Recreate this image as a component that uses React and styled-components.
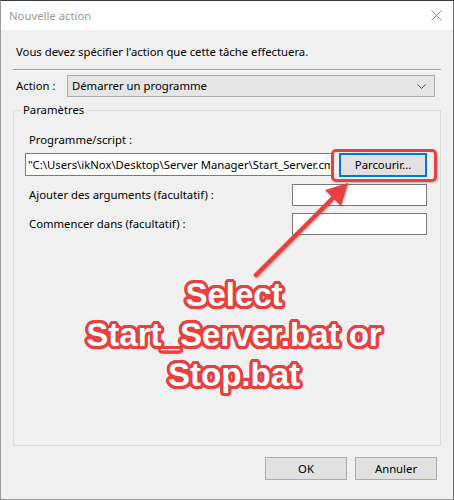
import React from 'react';
import styled, { createGlobalStyle } from 'styled-components';

const RED = '#e8403f';

const ring = (() => {
  const parts = [];
  for (let r of [1.5, 3]) {
    const n = r > 2 ? 24 : 12;
    for (let i = 0; i < n; i++) {
      const a = (i / n) * Math.PI * 2;
      parts.push(`${(Math.cos(a) * r).toFixed(2)}px ${(Math.sin(a) * r).toFixed(2)}px 0 ${RED}`);
    }
  }
  parts.push(`2px 3px 2px rgba(120,0,0,0.35)`);
  return parts.join(', ');
})();

const Global = createGlobalStyle`
  html, body { margin: 0; padding: 0; background: #f0f0f0; }
  body {
    font-family: "Noto Sans", "Liberation Sans", sans-serif;
    font-size: 11.3px;
    color: #000;
  }
  *, *::before, *::after { box-sizing: border-box; }
`;

const Window = styled.div`
  position: relative;
  width: 454px;
  height: 500px;
  display: flex;
  flex-direction: column;
  background: #f0f0f0;
  border: 1px solid #9a9a9a;
  border-top-color: #3c3c3c;
  border-right-color: #6a6a6a;
  overflow: hidden;
`;

const TitleBar = styled.div`
  height: 29px;
  flex: none;
  background: #fff;
  display: flex;
  align-items: center;
  justify-content: space-between;
  padding: 0 11px 0 8px;
`;

const Title = styled.span`
  color: #999;
  line-height: 16px;
`;

const CloseBtn = styled.div`
  width: 12px;
  height: 12px;
  display: flex;
  align-items: center;
  justify-content: center;
`;

const Body = styled.div`
  flex: 1;
  display: flex;
  flex-direction: column;
  padding: 14px 12px 19px 12px;
  min-height: 0;
`;

const Intro = styled.div`
  margin-left: 3px;
  line-height: 16px;
`;

const Separator = styled.div`
  margin-top: 9px;
  height: 2px;
  border-top: 1px solid #a0a0a0;
  border-bottom: 1px solid #fff;
`;

const ActionRow = styled.div`
  margin-top: 4px;
  display: flex;
  align-items: center;
  height: 22px;
`;

const ActionLabel = styled.span`
  width: 54px;
  padding-left: 3px;
  line-height: 16px;
  flex: none;
`;

const Combo = styled.div`
  flex: 1;
  margin-right: 6px;
  height: 22px;
  border: 1px solid #acacac;
  background: #e5e5e5;
  display: flex;
  align-items: center;
  justify-content: space-between;
  padding: 0 8px 0 4px;
  line-height: 16px;
`;

const Group = styled.fieldset`
  margin: 5px 0 0;
  padding: 0 13px 0 11px;
  border: 1px solid #dcdcdc;
  flex: 1;
  min-width: 0;
  display: flex;
  flex-direction: column;
`;

const Legend = styled.legend`
  padding: 0 2px;
  margin-left: -4px;
  line-height: 16px;
`;

const FieldLabel = styled.span`
  margin-left: 4px;
  line-height: 16px;
  margin-top: ${p => p.$top || 0}px;
`;

const PathRow = styled.div`
  margin-top: 5px;
  display: flex;
  align-items: flex-start;
  gap: 6px;
`;

const TextBox = styled.input`
  font-family: inherit;
  font-size: inherit;
  color: #000;
  background: #fff;
  border: 1px solid #7a7a7a;
  border-radius: 0;
  outline: none;
  padding: 0 2px;
  margin: 0;
  height: ${p => p.$h || 22}px;
  width: ${p => (p.$w ? `${p.$w}px` : 'auto')};
  flex: ${p => (p.$w ? 'none' : '1')};
  min-width: 0;
`;

const Button = styled.button`
  font-family: inherit;
  font-size: inherit;
  color: #000;
  margin: 0;
  padding: 0;
  width: ${p => p.$w}px;
  height: ${p => p.$h}px;
  flex: none;
  background: #e1e1e1;
  border: ${p => (p.$focus ? '2px solid #0078d7' : '1px solid #adadad')};
  border-radius: 0;
  line-height: 16px;
`;

const FieldRow = styled.div`
  margin-top: 7px;
  display: flex;
  align-items: center;
  justify-content: space-between;
`;

const Footer = styled.div`
  margin-top: 11px;
  margin-right: 4px;
  display: flex;
  justify-content: flex-end;
  gap: 8px;
`;

const Highlight = styled.div`
  position: absolute;
  left: 330px;
  top: 148px;
  width: 106px;
  height: 33px;
  border: 3px solid ${RED};
  border-radius: 5px;
  box-shadow: 1px 1px 2px rgba(0, 0, 0, 0.25);
  pointer-events: none;
`;

const ArrowLayer = styled.svg`
  position: absolute;
  left: -1px;
  top: -1px;
  width: 454px;
  height: 500px;
  pointer-events: none;
  filter: drop-shadow(1px 1px 1px rgba(0, 0, 0, 0.3));
`;

const Callout = styled.div`
  position: absolute;
  left: 233px;
  top: 274px;
  transform: translateX(-50%);
  white-space: nowrap;
  text-align: center;
  font-family: "Liberation Sans", Arial, sans-serif;
  font-weight: 700;
  font-size: 33px;
  line-height: 40px;
  color: #fff;
  text-shadow: ${ring};
  pointer-events: none;
`;

export default function App() {
  return (
    <>
      <Global />
      <Window>
        <TitleBar>
          <Title>Nouvelle action</Title>
          <CloseBtn>
            <svg width="11" height="11" viewBox="0 0 11 11">
              <path d="M0.5 0.5 L10.5 10.5 M10.5 0.5 L0.5 10.5" stroke="#8a8a8a" strokeWidth="1" fill="none" />
            </svg>
          </CloseBtn>
        </TitleBar>
        <Body>
          <Intro>Vous devez spécifier l'action que cette tâche effectuera.</Intro>
          <Separator />
          <ActionRow>
            <ActionLabel>Action :</ActionLabel>
            <Combo>
              <span>Démarrer un programme</span>
              <svg width="9" height="5" viewBox="0 0 9 5">
                <path d="M0.5 0.5 L4.5 4.5 L8.5 0.5" stroke="#555" strokeWidth="1" fill="none" />
              </svg>
            </Combo>
          </ActionRow>
          <Group>
            <Legend>Paramètres</Legend>
            <FieldLabel $top={14}>Programme/script :</FieldLabel>
            <PathRow>
              <TextBox
                $h={23}
                readOnly
                defaultValue={'"C:\\Users\\ikNox\\Desktop\\Server Manager\\Start_Server.cmd"'}
              />
              <Button $w={88} $h={24} $focus>Parcourir...</Button>
            </PathRow>
            <FieldRow>
              <FieldLabel>Ajouter des arguments (facultatif) :</FieldLabel>
              <TextBox $w={135} $h={22} readOnly defaultValue="" />
            </FieldRow>
            <FieldRow>
              <FieldLabel>Commencer dans (facultatif) :</FieldLabel>
              <TextBox $w={135} $h={22} readOnly defaultValue="" />
            </FieldRow>
          </Group>
          <Footer>
            <Button $w={82} $h={23}>OK</Button>
            <Button $w={82} $h={23}>Annuler</Button>
          </Footer>
        </Body>
        <Highlight />
        <ArrowLayer viewBox="0 0 454 500">
          <line x1="256" y1="275" x2="337" y2="194" stroke={RED} strokeWidth="4.5" strokeLinecap="round" />
          <polygon points="348,183 325,190 341,206" fill={RED} />
        </ArrowLayer>
        <Callout>
          Select
          <br />
          Start_Server.bat or
          <br />
          Stop.bat
        </Callout>
      </Window>
    </>
  );
}
